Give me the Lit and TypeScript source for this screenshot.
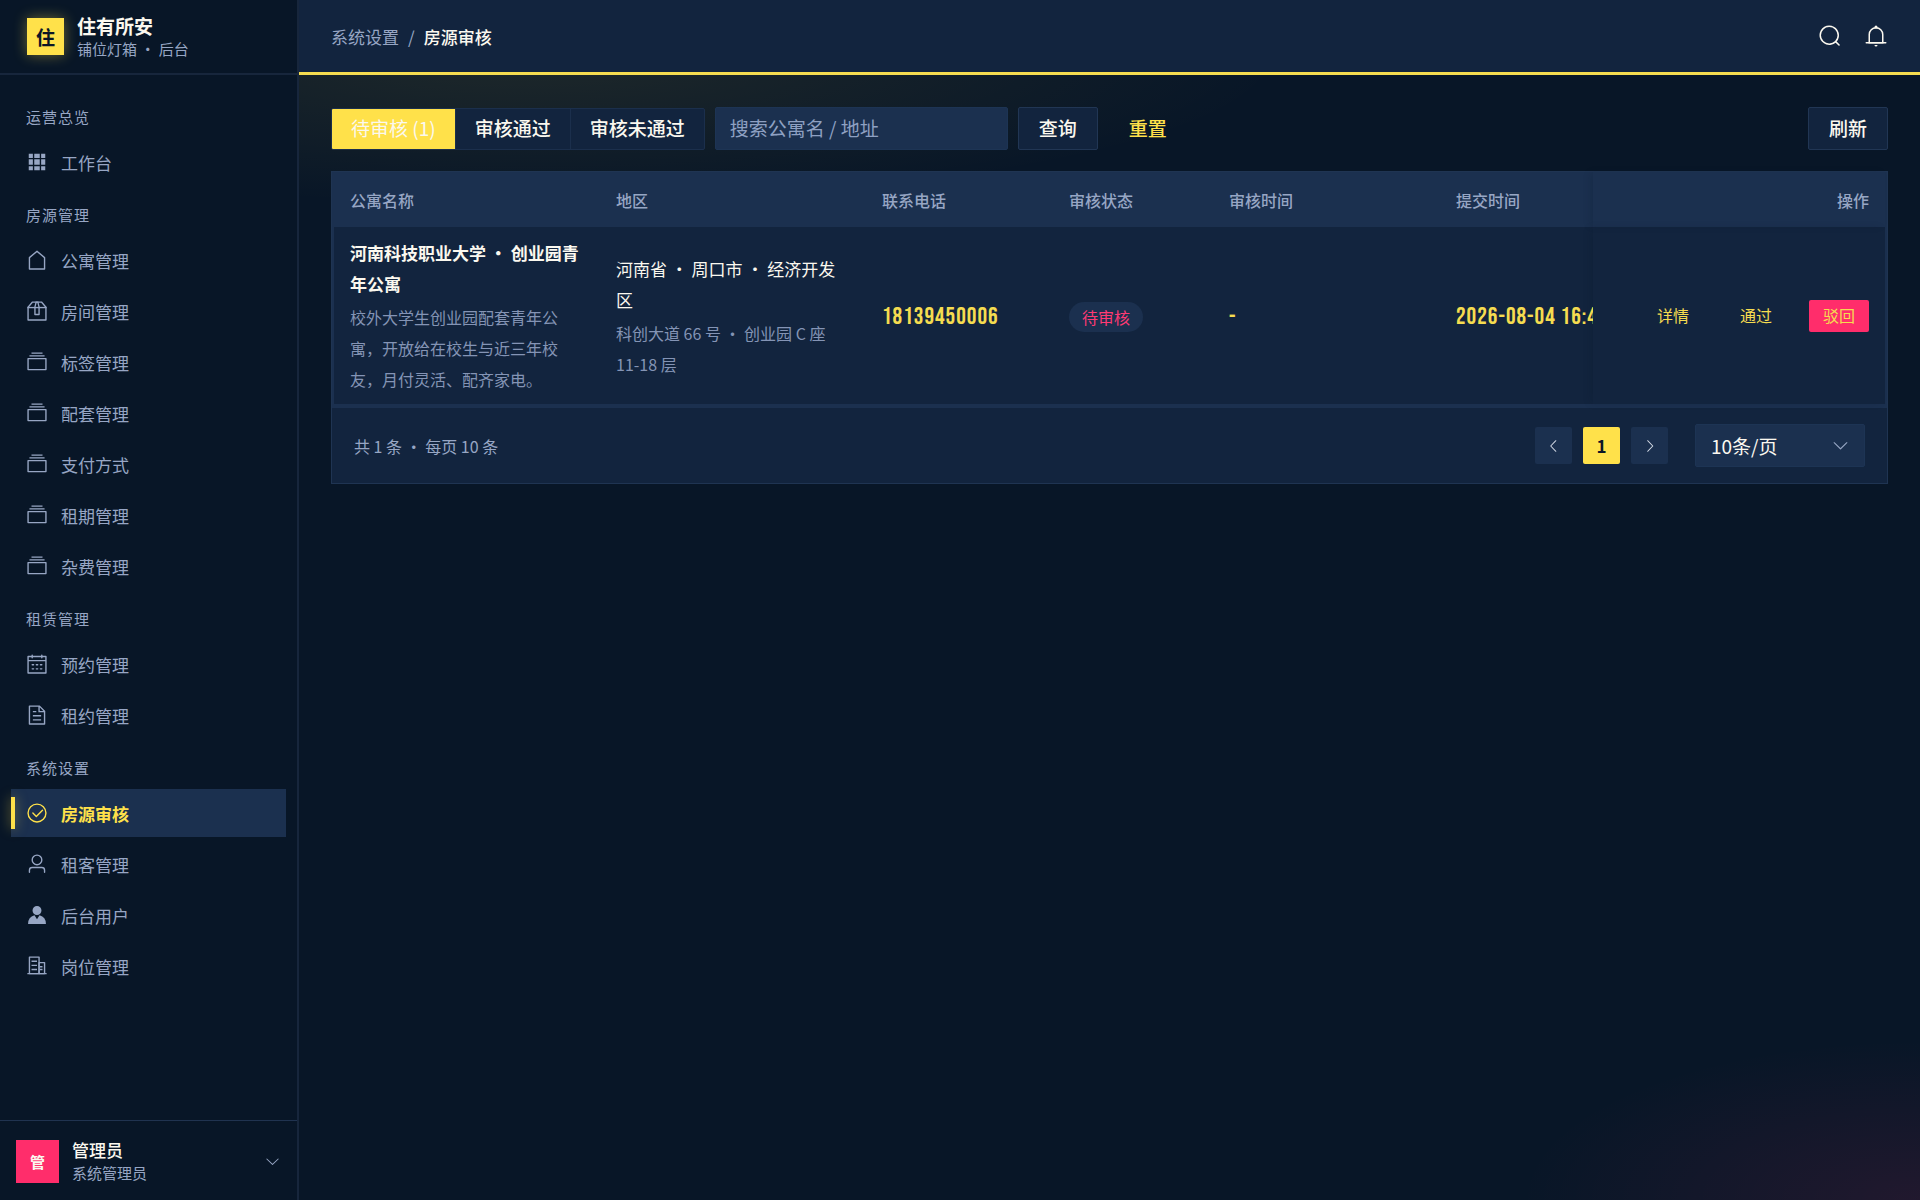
import { LitElement, html, css, svg } from "lit";
import { customElement, property, state } from "lit/decorators.js";
import { classMap } from "lit/directives/class-map.js";

const ICONS: Record<string, string[]> = {
  grid: ["M640 384v256H384V384zm64 0h192v256H704zm-64 512H384V704h256zm64 0V704h192v192zm-64-768v192H384V128zm64 0h192v192H704zM320 384v256H128V384zm0 512H128V704h192zm0-768v192H128V128z"],
  house: ["M192 413.952V896h640V413.952L512 147.328zM139.52 374.4l352-293.312a32 32 0 0 1 40.96 0l352 293.312A32 32 0 0 1 896 398.976V928a32 32 0 0 1-32 32H160a32 32 0 0 1-32-32V398.976a32 32 0 0 1 11.52-24.576"],
  box: [
    "M317.056 128 128 344.064V896h768V344.064L706.944 128zm-14.528-64h418.944a32 32 0 0 1 24.064 10.88l206.528 236.096A32 32 0 0 1 960 332.032V928a32 32 0 0 1-32 32H96a32 32 0 0 1-32-32V332.032a32 32 0 0 1 7.936-21.12L278.4 75.008A32 32 0 0 1 302.528 64",
    "M64 320h896v64H64z",
    "M448 327.872V640h128V327.872L526.08 128h-28.16zM448 64h128l64 256v352a32 32 0 0 1-32 32H416a32 32 0 0 1-32-32V320z",
  ],
  files: ["M128 384v448h768V384zm-32-64h832a32 32 0 0 1 32 32v512a32 32 0 0 1-32 32H96a32 32 0 0 1-32-32V352a32 32 0 0 1 32-32m64-128h704v64H160zm96-128h512v64H256z"],
  calendar: ["M128 384v512h768V192H768v32a32 32 0 1 1-64 0v-32H320v32a32 32 0 0 1-64 0v-32H128v128h768v64zm192-256h384V96a32 32 0 1 1 64 0v32h160a32 32 0 0 1 32 32v768a32 32 0 0 1-32 32H96a32 32 0 0 1-32-32V160a32 32 0 0 1 32-32h160V96a32 32 0 0 1 64 0zm-32 384h64a32 32 0 0 1 0 64h-64a32 32 0 0 1 0-64m0 192h64a32 32 0 1 1 0 64h-64a32 32 0 1 1 0-64m192-192h64a32 32 0 0 1 0 64h-64a32 32 0 0 1 0-64m0 192h64a32 32 0 1 1 0 64h-64a32 32 0 1 1 0-64m192-192h64a32 32 0 1 1 0 64h-64a32 32 0 1 1 0-64m0 192h64a32 32 0 1 1 0 64h-64a32 32 0 1 1 0-64"],
  document: ["M832 384H576V128H192v768h640zm-26.496-64L640 154.496V320zM160 64h480l256 256v608a32 32 0 0 1-32 32H160a32 32 0 0 1-32-32V96a32 32 0 0 1 32-32m160 448h384v64H320zm0-192h160v64H320zm0 384h384v64H320z"],
  check: [
    "M512 896a384 384 0 1 0 0-768 384 384 0 0 0 0 768m0 64a448 448 0 1 1 0-896 448 448 0 0 1 0 896",
    "M745.344 361.344a32 32 0 0 1 45.312 45.312l-288 288a32 32 0 0 1-45.312 0l-160-160a32 32 0 1 1 45.312-45.312L480 626.752z",
  ],
  user: ["M512 512a192 192 0 1 0 0-384 192 192 0 0 0 0 384m0 64a256 256 0 1 1 0-512 256 256 0 0 1 0 512m320 320v-96a96 96 0 0 0-96-96H288a96 96 0 0 0-96 96v96a32 32 0 1 1-64 0v-96a160 160 0 0 1 160-160h448a160 160 0 0 1 160 160v96a32 32 0 1 1-64 0"],
  avatar: ["M628.736 528.896A416 416 0 0 1 928 928H96a415.872 415.872 0 0 1 299.264-399.104L512 704zM720 304a208 208 0 1 1-416 0 208 208 0 0 1 416 0"],
  office: [
    "M192 128v704h384V128zm-32-64h448a32 32 0 0 1 32 32v768a32 32 0 0 1-32 32H160a32 32 0 0 1-32-32V96a32 32 0 0 1 32-32",
    "M256 256h256v64H256zm0 192h256v64H256zm0 192h256v64H256zm384-128h128v64H640zm0 128h128v64H640zM64 832h896v64H64z",
    "M640 384v448h192V384zm-32-64h256a32 32 0 0 1 32 32v512a32 32 0 0 1-32 32H608a32 32 0 0 1-32-32V352a32 32 0 0 1 32-32",
  ],
  search: ["m795.904 750.72 124.992 124.928a32 32 0 0 1-45.248 45.248L750.656 795.904a416 416 0 1 1 45.248-45.248zM480 832a352 352 0 1 0 0-704 352 352 0 0 0 0 704"],
  bell: [
    "M512 64a64 64 0 0 1 64 64v64H448v-64a64 64 0 0 1 64-64",
    "M256 768h512V448a256 256 0 1 0-512 0zm256-640a320 320 0 0 1 320 320v384H192V448a320 320 0 0 1 320-320",
    "M96 768h832q32 0 32 32t-32 32H96q-32 0-32-32t32-32m352 128h128a64 64 0 0 1-128 0",
  ],
  down: ["M831.872 340.864 512 652.672 192.128 340.864a30.592 30.592 0 0 0-42.752 0 29.12 29.12 0 0 0 0 41.6L489.664 714.24a32 32 0 0 0 44.672 0l340.288-331.712a29.12 29.12 0 0 0 0-41.728 30.592 30.592 0 0 0-42.752 0z"],
  left: ["M609.408 149.376 277.76 489.6a32 32 0 0 0 0 44.672l331.648 340.352a29.12 29.12 0 0 0 41.728 0 30.592 30.592 0 0 0 0-42.752L339.264 511.936l311.872-319.872a30.592 30.592 0 0 0 0-42.688 29.12 29.12 0 0 0-41.728 0"],
  right: ["M340.864 149.312a30.592 30.592 0 0 0 0 42.752L652.736 512 340.864 831.872a30.592 30.592 0 0 0 0 42.752 29.12 29.12 0 0 0 41.728 0L714.24 534.336a32 32 0 0 0 0-44.672L382.592 149.376a29.12 29.12 0 0 0-41.728 0z"],
};

@customElement("ui-icon")
class UiIcon extends LitElement {
  @property() name = "grid";

  static styles = css`
    :host { display: inline-flex; flex: none; width: 22px; height: 22px; }
    svg { width: 100%; height: 100%; fill: currentColor; }
  `;

  render() {
    return html`<svg viewBox="0 0 1024 1024" aria-hidden="true">
      ${(ICONS[this.name] ?? []).map((d) => svg`<path d=${d}></path>`)}
    </svg>`;
  }
}

interface NavItem { icon: string; label: string }
interface NavGroup { title: string; items: NavItem[] }

const NAV: NavGroup[] = [
  { title: "运营总览", items: [{ icon: "grid", label: "工作台" }] },
  {
    title: "房源管理",
    items: [
      { icon: "house", label: "公寓管理" },
      { icon: "box", label: "房间管理" },
      { icon: "files", label: "标签管理" },
      { icon: "files", label: "配套管理" },
      { icon: "files", label: "支付方式" },
      { icon: "files", label: "租期管理" },
      { icon: "files", label: "杂费管理" },
    ],
  },
  {
    title: "租赁管理",
    items: [
      { icon: "calendar", label: "预约管理" },
      { icon: "document", label: "租约管理" },
    ],
  },
  {
    title: "系统设置",
    items: [
      { icon: "check", label: "房源审核" },
      { icon: "user", label: "租客管理" },
      { icon: "avatar", label: "后台用户" },
      { icon: "office", label: "岗位管理" },
    ],
  },
];

@customElement("side-nav")
class SideNav extends LitElement {
  @state() private current = "房源审核";

  static styles = css`
    :host {
      display: flex;
      flex-direction: column;
      position: sticky;
      top: 0;
      height: 100vh;
      box-sizing: border-box;
      background: #081627;
      border-right: 2px solid #17263c;
      color: #97a6c4;
    }
    * { box-sizing: border-box; }
    .brand {
      display: flex;
      align-items: center;
      gap: 13px;
      height: 75px;
      padding: 0 27px;
      border-bottom: 2px solid #17263c;
    }
    .logo {
      display: grid;
      place-items: center;
      width: 37px;
      height: 37px;
      background: #ffe14a;
      box-shadow: 0 0 14px rgba(255, 225, 74, 0.4);
      color: #0b1626;
      font-size: 19px;
      font-weight: 700;
    }
    .name { color: #fbf8ef; font-size: 19px; font-weight: 700; line-height: 24px; }
    .sub { font-size: 15px; line-height: 22px; }
    nav { flex: 1; overflow: auto; padding: 13px 11px; scrollbar-width: none; }
    h2 {
      margin: 0;
      padding: 18px 15px 10px;
      font-size: 15px;
      font-weight: 400;
      line-height: 22px;
      letter-spacing: 1px;
    }
    ul {
      display: flex;
      flex-direction: column;
      gap: 3px;
      margin: 0;
      padding: 0;
      list-style: none;
    }
    .item {
      display: flex;
      align-items: center;
      gap: 13px;
      height: 48px;
      padding: 0 15px;
      color: inherit;
      font-size: 17px;
      text-decoration: none;
    }
    .active {
      position: relative;
      background: #1b304f;
      color: #ffe14a;
      font-weight: 700;
    }
    .active::before {
      content: "";
      position: absolute;
      left: 0;
      top: 8px;
      bottom: 8px;
      width: 4px;
      background: #ffe14a;
      box-shadow: 0 0 12px rgba(255, 225, 74, 0.5);
    }
    .account {
      display: flex;
      align-items: center;
      gap: 13px;
      width: 100%;
      height: 80px;
      padding: 1px 16px 0;
      border: 0;
      border-top: 1px solid #203350;
      background: none;
      color: inherit;
      font: inherit;
      text-align: left;
    }
    .avatar {
      display: grid;
      place-items: center;
      width: 43px;
      height: 43px;
      background: #ff2d6b;
      color: #fbf8ef;
      font-size: 15px;
      font-weight: 700;
    }
    .who { flex: 1; }
    .who span { display: block; }
    .person { color: #fbf8ef; font-size: 17px; font-weight: 500; line-height: 24px; }
    .account ui-icon { width: 17px; height: 17px; }
  `;

  private pick(event: Event, label: string) {
    event.preventDefault();
    this.current = label;
  }

  render() {
    return html`
      <div class="brand">
        <div class="logo">住</div>
        <div>
          <div class="name">住有所安</div>
          <div class="sub">铺位灯箱 · 后台</div>
        </div>
      </div>
      <nav>
        ${NAV.map((group) => html`
          <h2>${group.title}</h2>
          <ul>
            ${group.items.map((item) => html`
              <li>
                <a
                  href="#"
                  class=${classMap({ item: true, active: item.label === this.current })}
                  @click=${(e: Event) => this.pick(e, item.label)}
                ><ui-icon name=${item.icon}></ui-icon>${item.label}</a>
              </li>
            `)}
          </ul>
        `)}
      </nav>
      <button class="account">
        <span class="avatar">管</span>
        <span class="who">
          <span class="person">管理员</span>
          <span class="sub">系统管理员</span>
        </span>
        <ui-icon name="down"></ui-icon>
      </button>
    `;
  }
}

@customElement("top-bar")
class TopBar extends LitElement {
  static styles = css`
    :host {
      display: flex;
      align-items: center;
      justify-content: space-between;
      box-sizing: border-box;
      height: 75px;
      padding: 0 32px;
      background: #12243e;
      border-bottom: 3px solid #f5dc50;
      font-size: 17px;
      color: #97a6c4;
    }
    .crumbs, .tools { display: flex; align-items: center; }
    .crumbs { gap: 9px; }
    .crumbs a { color: inherit; text-decoration: none; }
    .here { color: #fbf8ef; font-weight: 500; }
    .tools { gap: 22px; }
    button { display: flex; padding: 0; border: 0; background: none; color: #fbf8ef; }
    button ui-icon { width: 24px; height: 24px; }
  `;

  render() {
    return html`
      <div class="crumbs">
        <a href="#">系统设置</a><span>/</span><span class="here">房源审核</span>
      </div>
      <div class="tools">
        <button aria-label="搜索"><ui-icon name="search"></ui-icon></button>
        <button aria-label="通知"><ui-icon name="bell"></ui-icon></button>
      </div>
    `;
  }
}

const TABS = ["待审核 (1)", "审核通过", "审核未通过"];

const ROWS = [
  {
    name: "河南科技职业大学 · 创业园青年公寓",
    desc: "校外大学生创业园配套青年公寓，开放给在校生与近三年校友，月付灵活、配齐家电。",
    area: "河南省 · 周口市 · 经济开发区",
    address: "科创大道 66 号 · 创业园 C 座 11-18 层",
    phone: "18139450006",
    status: "待审核",
    reviewed: "-",
    submitted: "2026-08-04 16:40",
  },
];

@customElement("review-page")
class ReviewPage extends LitElement {
  @state() private tab = 0;

  static styles = css`
    :host { display: block; padding: 32px; color: #fbf8ef; font-size: 17px; }
    * { box-sizing: border-box; }
    button, input, select { font: inherit; color: inherit; }
    .filters { display: flex; align-items: center; gap: 10px; margin-bottom: 21px; font-size: 19px; }
    .tabs {
      display: flex;
      height: 42px;
      border: 1px solid #1b2f4c;
      border-radius: 2px;
      overflow: hidden;
      background: #12243e;
    }
    .tab { padding: 0 19px 2px; border: 0; background: none; font-weight: 500; }
    .tab + .tab { border-left: 1px solid #1b2f4c; }
    .tab.on { background: #ffe14a; font-weight: 400; }
    .query {
      width: 293px;
      height: 43px;
      padding: 0 14px 2px;
      border: 1px solid #1d3454;
      border-radius: 2px;
      background: #1b304f;
      outline: 0;
    }
    .query::placeholder { color: #8ea0c2; opacity: 1; }
    .btn {
      height: 43px;
      padding: 0 20px 2px;
      border: 1px solid #213654;
      border-radius: 2px;
      background: #12243e;
      font-weight: 500;
    }
    .btn.plain { border-color: transparent; background: none; color: #ffe14a; }
    .btn.last { margin-left: auto; }
    .card { border: 1px solid #1f3452; background: #12243e; }
    table {
      width: 100%;
      table-layout: fixed;
      border-collapse: separate;
      border-spacing: 0;
      border: solid #1b304f;
      border-width: 0 2px 4px;
    }
    .c-phone { width: 187px; }
    .c-status { width: 160px; }
    .c-reviewed { width: 227px; }
    .c-submitted { width: 153px; }
    .c-ops { width: 292px; }
    th {
      height: 55px;
      padding: 0 16px;
      background: #1b304f;
      color: #97a6c4;
      font-size: 16px;
      font-weight: 500;
      text-align: left;
    }
    th.right { text-align: right; }
    td { padding: 10px 16px 9px; line-height: 31px; vertical-align: middle; }
    .title { font-weight: 700; }
    .note { margin-top: 3px; color: #8494b5; font-size: 16px; }
    .num {
      overflow: hidden;
      color: #f5dc50;
      font-family: "Bebas Neue", "Liberation Sans Narrow", Roboto, sans-serif;
      font-size: 24px;
      letter-spacing: 1px;
      white-space: nowrap;
    }
    .num.cut { padding-right: 0; }
    .tag {
      display: inline-block;
      padding: 0 13px;
      border-radius: 15px;
      background: #1b304f;
      color: #ff3a74;
      font-size: 16px;
      line-height: 30px;
    }
    .ops { display: flex; justify-content: flex-end; gap: 23px; }
    .ops button {
      height: 32px;
      padding: 0 14px 2px;
      border: 0;
      border-radius: 2px;
      background: none;
      color: #f5dc50;
      font-size: 16px;
      line-height: 30px;
    }
    .ops .danger { background: #ff2d6b; }
    .shade { box-shadow: -4px 0 8px -2px rgba(8, 22, 38, 0.18); }
    .pager { display: flex; align-items: center; gap: 11px; padding: 16px 22px; }
    .total { margin-right: auto; color: #97a6c4; font-size: 16px; }
    .page {
      display: grid;
      place-items: center;
      width: 37px;
      height: 37px;
      padding: 0;
      border: 0;
      border-radius: 2px;
      background: #1b304f;
      color: #d5dbe6;
    }
    .page ui-icon { width: 16px; height: 16px; }
    .page.on { background: #ffe14a; color: #0b1626; font-weight: 700; }
    .size { display: grid; align-items: center; margin-left: 16px; width: 170px; }
    .size > * { grid-area: 1 / 1; }
    .size ui-icon {
      justify-self: end;
      width: 19px;
      height: 19px;
      margin-right: 15px;
      color: #97a6c4;
      pointer-events: none;
    }
    select {
      appearance: none;
      width: 100%;
      height: 43px;
      padding: 0 15px 1px;
      border: 1px solid #1d3454;
      border-radius: 2px;
      background: #1b304f;
      font-size: 19px;
    }
  `;

  render() {
    return html`
      <div class="filters">
        <div class="tabs">
          ${TABS.map((label, i) => html`
            <button class=${classMap({ tab: true, on: i === this.tab })} @click=${() => (this.tab = i)}>${label}</button>
          `)}
        </div>
        <input class="query" type="text" aria-label="搜索公寓名 / 地址" placeholder="搜索公寓名 / 地址" />
        <button class="btn">查询</button>
        <button class="btn plain">重置</button>
        <button class="btn last">刷新</button>
      </div>
      <section class="card">
        <table>
          <colgroup>
            <col /><col /><col class="c-phone" /><col class="c-status" /><col class="c-reviewed" />
            <col class="c-submitted" /><col class="c-ops" />
          </colgroup>
          <thead>
            <tr>
              <th>公寓名称</th><th>地区</th><th>联系电话</th><th>审核状态</th><th>审核时间</th>
              <th>提交时间</th><th class="right shade">操作</th>
            </tr>
          </thead>
          <tbody>
            ${ROWS.map((row) => html`
              <tr>
                <td><div class="title">${row.name}</div><div class="note">${row.desc}</div></td>
                <td><div>${row.area}</div><div class="note">${row.address}</div></td>
                <td class="num">${row.phone}</td>
                <td><span class="tag">${row.status}</span></td>
                <td class="num">${row.reviewed}</td>
                <td class="num cut">${row.submitted}</td>
                <td class="shade">
                  <div class="ops">
                    <button>详情</button><button>通过</button><button class="danger">驳回</button>
                  </div>
                </td>
              </tr>
            `)}
          </tbody>
        </table>
        <div class="pager">
          <span class="total">共 1 条 · 每页 10 条</span>
          <button class="page" aria-label="上一页"><ui-icon name="left"></ui-icon></button>
          <button class="page on">1</button>
          <button class="page" aria-label="下一页"><ui-icon name="right"></ui-icon></button>
          <div class="size">
            <select aria-label="每页条数">
              <option>10条/页</option>
            </select>
            <ui-icon name="down"></ui-icon>
          </div>
        </div>
      </section>
    `;
  }
}

@customElement("app-root")
class AppRoot extends LitElement {
  static styles = css`
    :host {
      display: grid;
      grid-template-columns: 299px minmax(0, 1fr);
      min-height: 100vh;
      background: #081627;
      font-family: "Noto Sans CJK SC", "Noto Sans", sans-serif;
    }
    main {
      background:
        radial-gradient(ellipse 760px 150px at 14% 56px, rgba(255, 225, 74, 0.09), transparent),
        radial-gradient(ellipse 400px 160px at 100% 100%, rgba(255, 45, 107, 0.1), transparent),
        #081627;
    }
  `;

  render() {
    return html`
      <side-nav lang="zh-CN"></side-nav>
      <main lang="zh-CN">
        <top-bar></top-bar>
        <review-page></review-page>
      </main>
    `;
  }
}
